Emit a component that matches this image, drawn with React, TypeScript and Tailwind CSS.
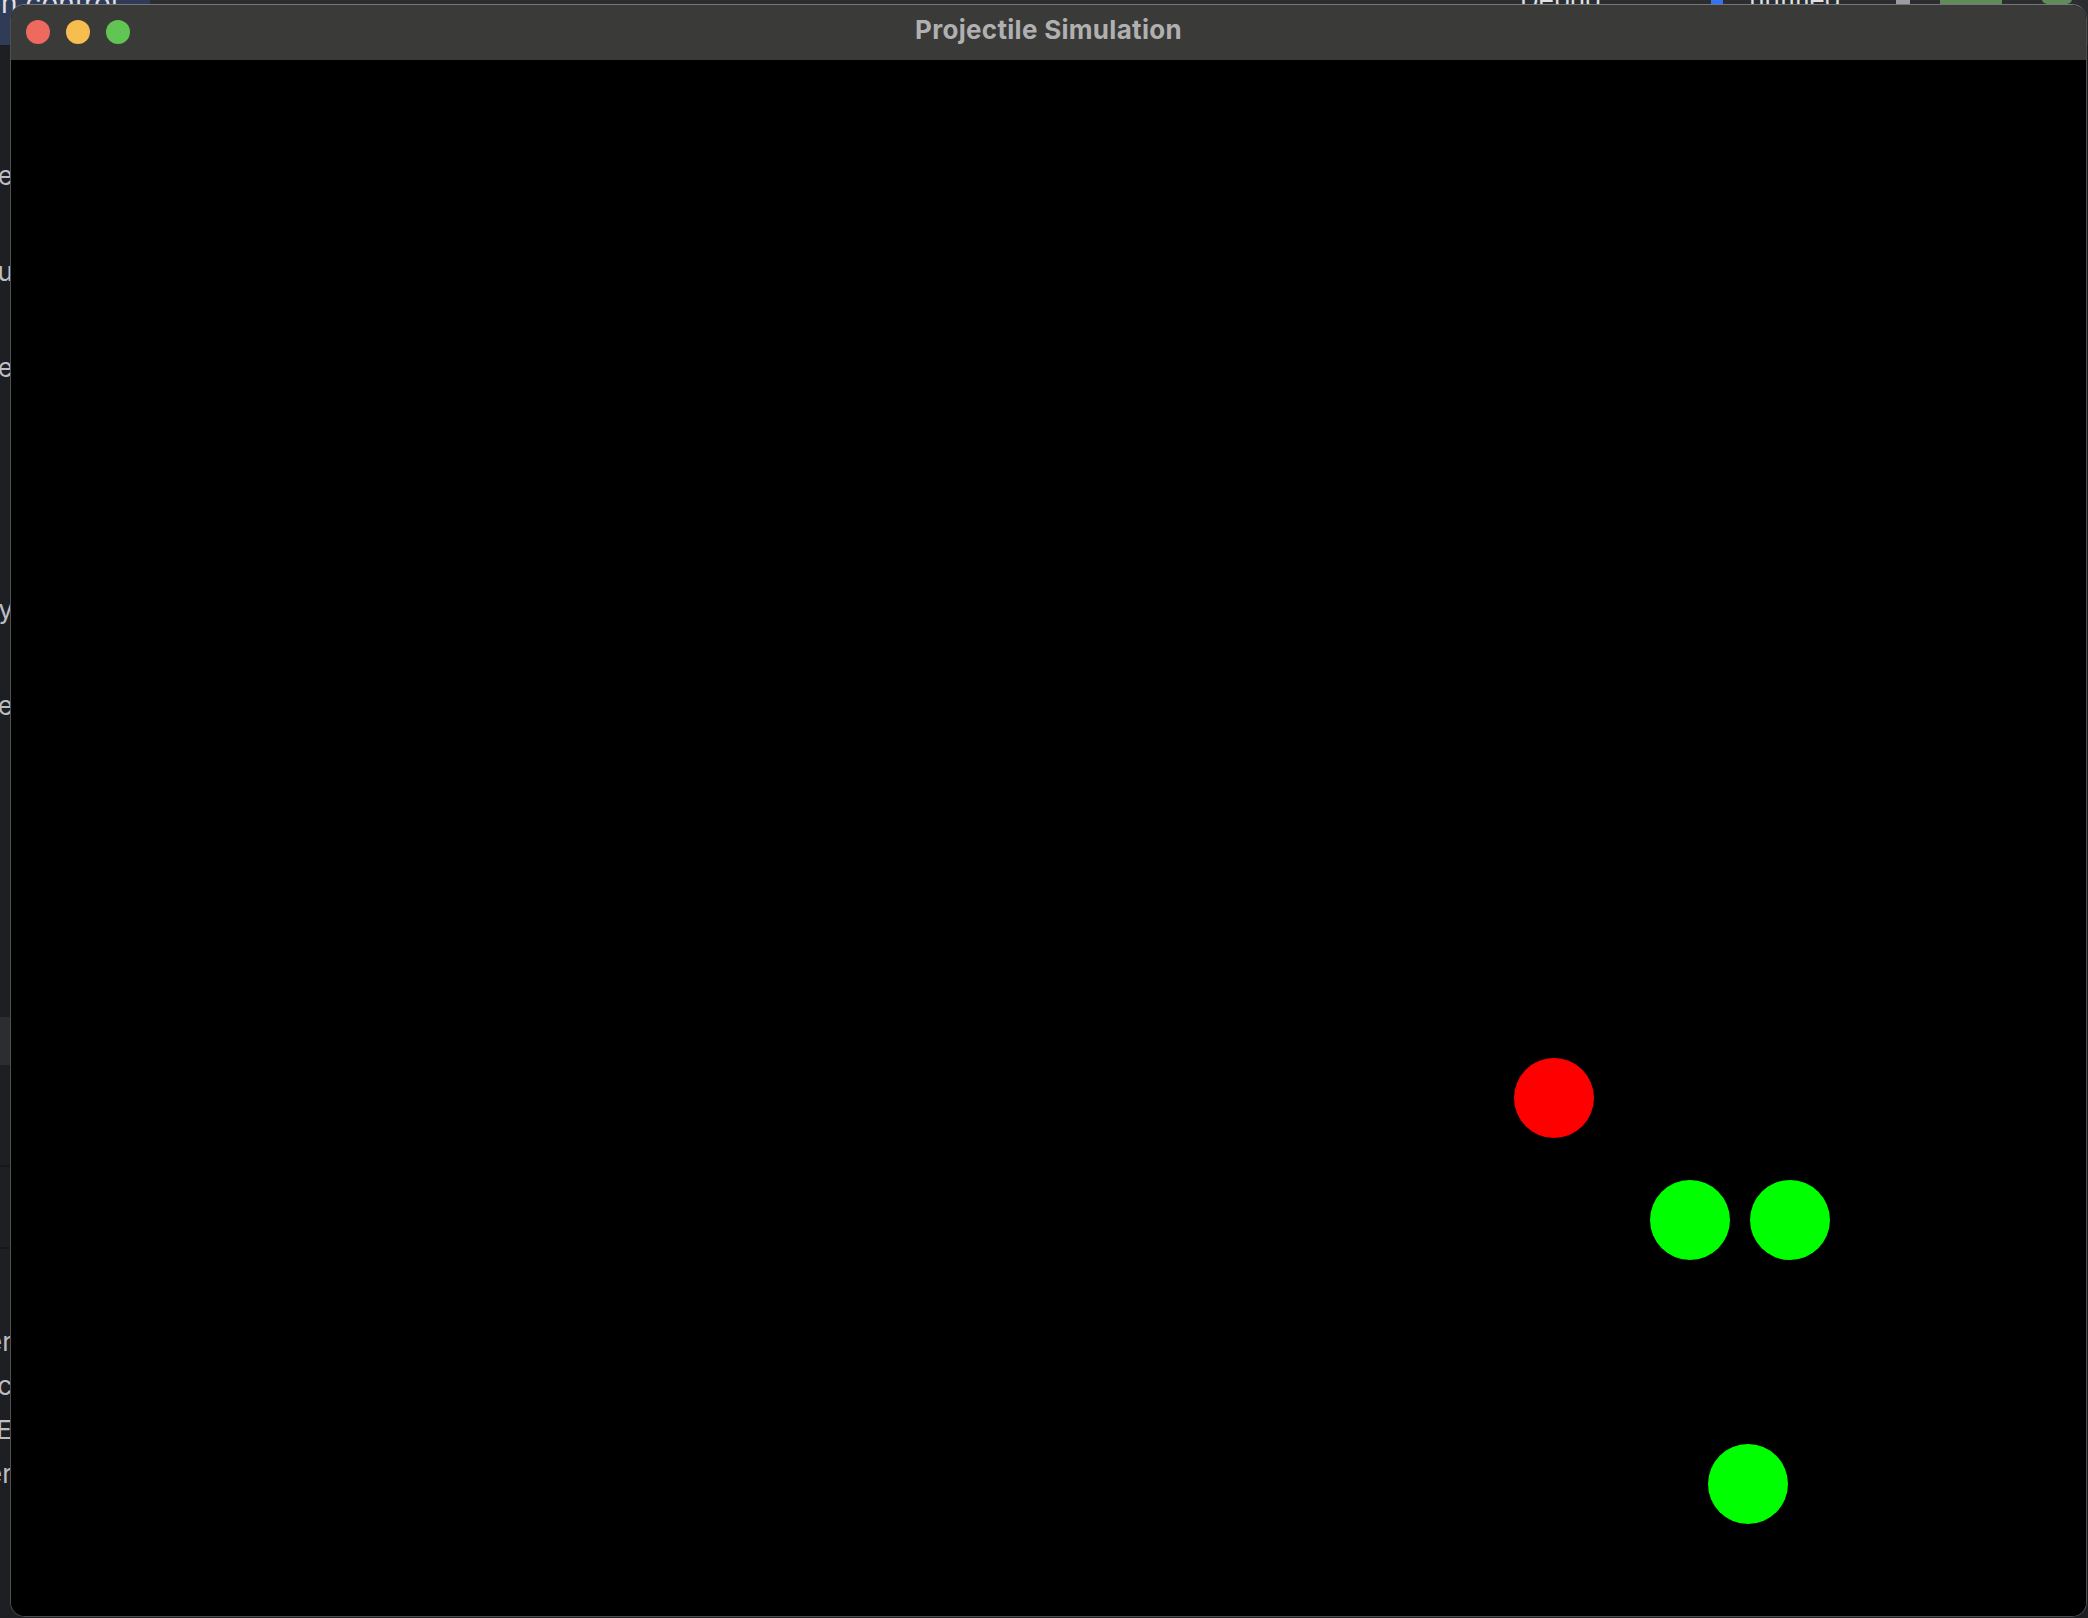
const sideRows = [
  { text: "Source", top: 160 },
  { text: "Menu", top: 256 },
  { text: "Profile", top: 352 },
  { text: "History", top: 594 },
  { text: "Save", top: 690 },
];

const bottomRows = ["Filter", "Doc", "EE", "Order"];

const balls = [
  { color: "bg-[#ff0000]", left: 1503, top: 998 },
  { color: "bg-[#00ff00]", left: 1639, top: 1120 },
  { color: "bg-[#00ff00]", left: 1739, top: 1120 },
  { color: "bg-[#00ff00]", left: 1697, top: 1384 },
];

export default function App() {
  return (
    <div className="relative w-[2088px] h-[1618px] overflow-hidden bg-[#1e1f22] font-['Inter',sans-serif]">
      {/* IDE behind the window */}
      <div className="absolute inset-0 flex flex-col">
        <div className="flex h-[45px] bg-[#2b2d30]">
          <div className="w-[150px] bg-[#2f3b57] overflow-hidden">
            <p className="-mt-[12px] text-[28px] leading-[30px] text-[#dfe1e5] whitespace-nowrap -ml-[82px]">
              Version control
            </p>
          </div>
          <div className="flex-1 flex items-start overflow-hidden">
            <p className="ml-[1370px] -mt-[14px] text-[26px] leading-[28px] text-[#dfe1e5]">Debug</p>
            <div className="ml-[110px] -mt-[8px] w-[12px] h-[12px] bg-[#3574f0]" />
            <p className="ml-[26px] -mt-[14px] text-[26px] leading-[28px] text-[#dfe1e5]">untitled</p>
            <div className="ml-[55px] -mt-[6px] w-[14px] h-[10px] bg-[#9a9da2]" />
            <div className="ml-[30px] -mt-[6px] w-[62px] h-[10px] bg-[#5f8c5a]" />
            <div className="ml-[40px] -mt-[6px] w-[30px] h-[10px] rounded-full bg-[#5f8c5a]" />
          </div>
        </div>
        <div className="w-[10px] flex-1 relative overflow-hidden border-t border-[#1a1b1d]">
          {sideRows.map((r) => (
            <div key={r.text} className="absolute -right-[3px] text-[26px] leading-[30px] text-[#bcbec4] whitespace-nowrap" style={{ top: r.top - 45 }}>
              {r.text}
            </div>
          ))}
          <div className="absolute left-0 right-0 top-[971px] h-[48px] bg-[#2b2d31]" />
          <div className="absolute left-0 right-0 top-[1119px] h-[2px] bg-[#17181a]" />
          <div className="absolute left-0 right-0 top-[1201px] h-[2px] bg-[#17181a]" />
          {bottomRows.map((t, i) => (
            <div key={t} className="absolute -right-[2px] text-[26px] leading-[30px] text-[#bcbec4] whitespace-nowrap" style={{ top: 1281 + i * 44 }}>
              {t}
            </div>
          ))}
        </div>
      </div>

      {/* Simulation window */}
      <div className="absolute left-[10px] top-[4px] w-[2077px] h-[1613px] rounded-[15px] overflow-hidden border border-[#4f4f4f] border-t-[#767676] bg-black flex flex-col">
        <div className="h-[55px] shrink-0 bg-[#3a3a39] grid grid-cols-[1fr_auto_1fr] items-center">
          <div className="flex items-center gap-[16px] pl-[15px] pb-[1px]">
            <span className="w-[24px] h-[24px] rounded-full bg-[#ee6a5f]" />
            <span className="w-[24px] h-[24px] rounded-full bg-[#f5be4f]" />
            <span className="w-[24px] h-[24px] rounded-full bg-[#61c554]" />
          </div>
          <h1 className="text-[26px] leading-[30px] font-bold text-[#b0b0b0] tracking-[0.3px] pb-[5px]">Projectile Simulation</h1>
          <div />
        </div>
        <div className="relative flex-1 bg-black">
          {balls.map((b, i) => (
            <div
              key={i}
              className={`absolute w-[80px] h-[80px] rounded-full ${b.color}`}
              style={{ left: b.left, top: b.top }}
            />
          ))}
        </div>
      </div>
    </div>
  );
}
